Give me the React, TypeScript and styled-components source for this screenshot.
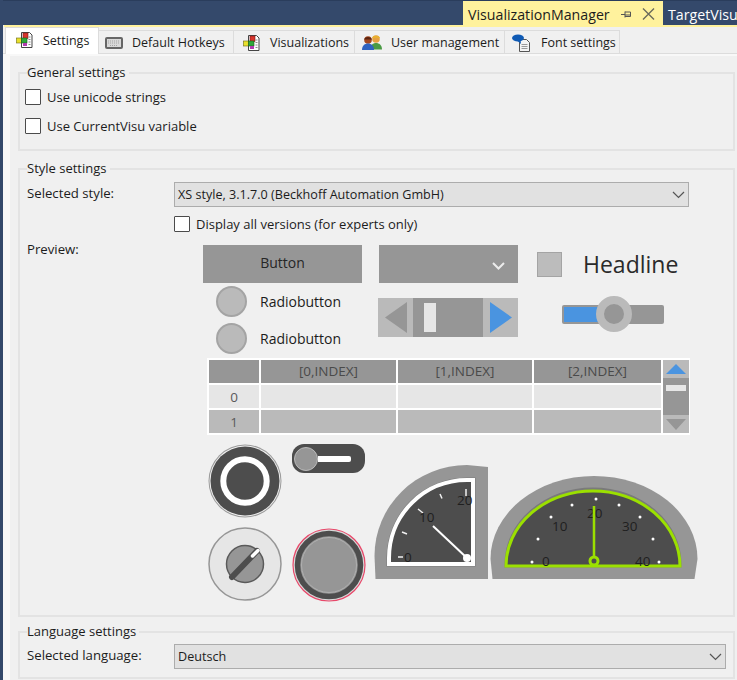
import React from 'react'
import styled, { createGlobalStyle } from 'styled-components'

const GlobalStyle = createGlobalStyle`
  html, body {
    margin: 0;
    padding: 0;
    background: #f0f0f0;
  }
  body {
    font-family: "Open Sans", "Noto Sans", "Liberation Sans", sans-serif;
    font-size: 13px;
    color: #1c1c1c;
  }
`

const Frame = styled.div`
  width: 737px;
  height: 680px;
  overflow: hidden;
  display: flex;
  flex-direction: column;
  background: #f0f0f0;
  box-sizing: border-box;
  border-left: 3px solid #34496b;
`

const TitleBar = styled.div`
  height: 25px;
  margin-left: -3px;
  flex: none;
  display: flex;
  justify-content: flex-end;
  background: #34496b;
  border-top: 1px solid #2a3d5c;
  box-sizing: border-box;
`

const DocTab = styled.div<{ $active?: boolean }>`
  display: flex;
  align-items: center;
  box-sizing: border-box;
  height: 24px;
  font-size: 14.2px;
  padding-top: 2px;
  white-space: nowrap;
  overflow: hidden;
  padding-left: 5px;
  width: ${p => (p.$active ? '200px' : '74px')};
  background: ${p => (p.$active ? '#fff29d' : '#34496b')};
  color: ${p => (p.$active ? '#1c1c1c' : '#ffffff')};
`

const TabGlyphs = styled.span`
  margin-left: 11px;
  display: flex;
  align-items: center;
  gap: 10px;
`

const AccentLine = styled.div`
  height: 2px;
  margin-left: 1px;
  flex: none;
  background: #fff29d;
`

const TabStrip = styled.div`
  height: 27px;
  flex: none;
  display: flex;
  align-items: flex-end;
  padding-left: 2px;
  border-bottom: 1px solid #dcdcdc;
  box-sizing: border-box;
  background: #f0f0f0;
`

const Tab = styled.div<{ $active?: boolean; $width: number; $pad: number }>`
  width: ${p => p.$width}px;
  height: ${p => (p.$active ? 27 : 23)}px;
  margin-bottom: ${p => (p.$active ? -1 : 0)}px;
  box-sizing: border-box;
  display: flex;
  align-items: center;
  gap: 8px;
  font-size: 12.5px;
  padding-left: ${p => p.$pad}px;
  padding-top: ${p => (p.$active ? 0 : 1)}px;
  padding-bottom: ${p => (p.$active ? 2 : 0)}px;
  background: ${p => (p.$active ? '#ffffff' : '#f0f0f0')};
  border: 1px solid #dcdcdc;
  border-left-width: ${p => (p.$active ? 1 : 0)}px;
  border-bottom: none;
  white-space: nowrap;
  position: relative;
`

const Content = styled.div`
  flex: 1;
  padding: 9px 2px 0 8px;
  border-left: 7px solid #f8f8f8;
  border-top: 2px solid #f8f8f8;
  display: flex;
  flex-direction: column;
`

const Group = styled.fieldset<{ $height: number; $gap?: number }>`
  margin: 0 0 ${p => p.$gap ?? 0}px 0;
  padding: 0 7px 0 7px;
  height: ${p => p.$height}px;
  flex: none;
  box-sizing: border-box;
  border: 2px solid #e3e3e3;
  min-width: 0;
`

const GroupTitle = styled.legend`
  padding: 0 3px 0 0;
  margin-left: 0;
  font-size: 13px;
  line-height: 15px;
`

const CheckRow = styled.label<{ $top: number; $indent?: number }>`
  display: flex;
  align-items: center;
  gap: 6px;
  margin-top: ${p => p.$top}px;
  margin-left: ${p => p.$indent ?? -2}px;
  height: 16px;
`

const CheckBox = styled.span`
  width: 16px;
  height: 16px;
  flex: none;
  box-sizing: border-box;
  background: #ffffff;
  border: 1px solid #4b4b4b;
  border-radius: 1px;
`

const FieldRow = styled.div<{ $top: number }>`
  display: flex;
  align-items: center;
  margin-top: ${p => p.$top}px;
  height: 26px;
`

const FieldLabel = styled.span`
  width: 147px;
  flex: none;
  font-size: 13.2px;
  margin-top: -2px;
`

const Select = styled.div<{ $width: number }>`
  width: ${p => p.$width}px;
  height: 25px;
  box-sizing: border-box;
  display: flex;
  align-items: center;
  justify-content: space-between;
  padding: 1px 3px 0 3px;
  font-size: 12.6px;
  background: #e1e1e1;
  border: 1px solid #acacac;
`

const PreviewRow = styled.div`
  display: flex;
  margin-top: 5px;
`

const PreviewLabel = styled.span`
  width: 176px;
  flex: none;
  margin-top: 3px;
  font-size: 13.2px;
`

const PreviewArea = styled.div`
  display: flex;
  flex-direction: column;
  margin-top: 8px;
`

const TopControls = styled.div`
  display: flex;
`

const Column = styled.div<{ $width: number }>`
  width: ${p => p.$width}px;
  flex: none;
  display: flex;
  flex-direction: column;
`

const PlainButton = styled.div`
  height: 38px;
  width: 159px;
  box-sizing: border-box;
  padding-bottom: 3px;
  background: #969696;
  display: flex;
  align-items: center;
  justify-content: center;
  font-size: 14px;
  color: #262626;
`

const DropButton = styled(PlainButton)`
  width: 139px;
  justify-content: flex-end;
  padding: 4px 13px 0 0;
`

const RadioRow = styled.div`
  display: flex;
  align-items: center;
  height: 31px;
  margin-left: 13px;
  gap: 13px;
  font-size: 14px;
`

const RadioDot = styled.span`
  width: 31px;
  height: 31px;
  box-sizing: border-box;
  border-radius: 50%;
  background: #bababa;
  border: 2px solid #a4a4a4;
`

const Radios = styled.div`
  display: flex;
  flex-direction: column;
  gap: 6px;
  margin-top: 3px;
`

const Stepper = styled.div`
  width: 140px;
  height: 39px;
  margin: 15px 0 0 -1px;
  display: flex;
  background: #bababa;
`

const StepperEnd = styled.div`
  width: 35px;
  flex: none;
  display: flex;
  align-items: center;
  justify-content: center;
`

const StepperTrack = styled.div`
  flex: 1;
  background: #969696;
  padding: 5px 0 0 11px;
`

const StepperThumb = styled.div`
  width: 12px;
  height: 29px;
  background: #e6e6e6;
`

const HeadlineRow = styled.div`
  display: flex;
  align-items: center;
  gap: 21px;
  height: 38px;
`

const HeadlineBox = styled.span`
  width: 25px;
  height: 25px;
  box-sizing: border-box;
  background: #bcbcbc;
  border: 1px solid #a4a4a4;
`

const Headline = styled.span`
  font-size: 23px;
  line-height: 30px;
  margin-top: -1px;
  font-weight: 400;
  color: #2a2a2a;
`

const SliderBox = styled.div`
  margin: 13px 0 0 25px;
  width: 102px;
  height: 36px;
  display: flex;
  align-items: center;
  position: relative;
`

const SliderTrack = styled.div`
  width: 102px;
  height: 19px;
  box-sizing: border-box;
  background: #969696;
  border-radius: 2px;
  padding: 2px;
`

const SliderFill = styled.div`
  width: 36px;
  height: 100%;
  background: #4a94e0;
`

const SliderKnob = styled.span`
  position: absolute;
  left: 34px;
  top: 0;
  width: 36px;
  height: 36px;
  box-sizing: border-box;
  border-radius: 50%;
  background: #969696;
  border: 8px solid #bababa;
`

const TableWrap = styled.div`
  margin: 4px 0 0 4px;
  width: 483px;
  height: 77px;
  box-sizing: border-box;
  background: #ffffff;
  padding: 2px;
  display: flex;
  gap: 2px;
`

const TableGrid = styled.div`
  width: 452px;
  display: grid;
  grid-template-columns: 50px 135px 134px 127px;
  grid-template-rows: 23px 23px 23px;
  gap: 2px;
`

const Cell = styled.div<{ $tone: 'head' | 'light' | 'mid' }>`
  display: flex;
  align-items: center;
  justify-content: center;
  font-size: 13.5px;
  padding-bottom: ${p => (p.$tone === 'head' ? 2 : 0)}px;
  color: ${p => (p.$tone === 'head' ? '#4a4a4a' : '#5a5a5a')};
  background: ${p => (p.$tone === 'head' ? '#969696' : p.$tone === 'light' ? '#e6e6e6' : '#bababa')};
`

const ScrollBar = styled.div`
  width: 26px;
  flex: none;
  display: flex;
  flex-direction: column;
  background: #969696;
`

const ScrollEnd = styled.div`
  height: 18px;
  flex: none;
  background: #bababa;
  display: flex;
  align-items: center;
  justify-content: center;
`

const ScrollTrack = styled.div`
  flex: 1;
  padding: 7px 3px 0;
`

const ScrollThumb = styled.div`
  height: 6px;
  background: #e6e6e6;
`

const BottomControls = styled.div`
  display: flex;
  margin: 9px 0 0 5px;
  align-items: flex-start;
`

const Stack = styled.div<{ $width: number; $gap: number }>`
  width: ${p => p.$width}px;
  flex: none;
  display: flex;
  flex-direction: column;
  gap: ${p => p.$gap}px;
`

const Toggle = styled.div`
  width: 73px;
  height: 29px;
  box-sizing: border-box;
  border-radius: 12px;
  background: #4d4d4d;
  display: flex;
  align-items: center;
  padding-left: 2px;
`

const ToggleKnob = styled.span`
  width: 24px;
  height: 24px;
  flex: none;
  box-sizing: border-box;
  border-radius: 50%;
  background: #969696;
  border: 1px solid #bababa;
`

const ToggleBar = styled.span`
  width: 33px;
  height: 6px;
  background: #ffffff;
  border-radius: 0 2px 2px 0;
`

const GaugeSlot = styled.div<{ $top: number; $left: number }>`
  margin: ${p => p.$top}px 0 0 ${p => p.$left}px;
  line-height: 0;
`

const GaugeText = styled.text`
  font-family: "Open Sans", "Noto Sans", sans-serif;
  font-size: 13.5px;
  fill: #1f1f1f;
`

const SettingsIcon = () => (
  <svg width="20" height="18" viewBox="-1 0 20 18">
    <path d="M5.500 1.500h8l2.500 2.500v12.500H5.500z" fill="#fff" stroke="#444" />
    <rect x="7" y="2" width="5" height="5.500" fill="#d9342c" stroke="#7a1d18" strokeWidth=".6" />
    <rect x="0.500" y="7" width="5" height="5" fill="#e8e02c" stroke="#6d6a12" strokeWidth=".6" />
    <rect x="5.500" y="7" width="5.500" height="5" fill="#2fa83a" stroke="#175a1d" strokeWidth=".6" />
    <rect x="7" y="12" width="4" height="3" fill="#b23bb0" />
    <path d="M12.500 6h2M12.500 8.500h2M12.500 11h2M12.500 13.500h2" stroke="#8a8a8a" />
  </svg>
)

const KeyboardIcon = () => (
  <svg width="20" height="16" viewBox="0 0 20 16">
    <rect x="1" y="2" width="18" height="12" rx="2" fill="#666666" />
    <rect x="3" y="4" width="14" height="8" fill="#d8d8d8" />
    <path d="M4 6h12M4 8h12M6 10.500h8" stroke="#a4a4a4" strokeDasharray="1 1" />
  </svg>
)

const UsersIcon = () => (
  <svg width="22" height="18" viewBox="0 0 22 18">
    <circle cx="15" cy="5" r="3.800" fill="#e6a040" />
    <path d="M9.500 15.500c0-4.500 2.500-6.500 5.500-6.500s6 2 6 6.500z" fill="#4a9a44" />
    <path d="M11 4c1-3 7-3 8 0z" fill="#e8b030" />
    <circle cx="7" cy="6" r="3.800" fill="#a5481f" />
    <path d="M1 16c0-4.500 3-6.500 6-6.500s6 2 6 6.500z" fill="#2f63c0" />
    <path d="M3 5.500c1-3.500 7-3.500 8 0z" fill="#5c2410" />
  </svg>
)

const FontIcon = () => (
  <svg width="22" height="18" viewBox="0 0 22 18">
    <path d="M8.500 5.500h7l3 3v9h-10z" fill="#f4f4f4" stroke="#555" />
    <path d="M10.500 10.500h6M10.500 12.500h6M10.500 14.500h6" stroke="#9a9a9a" />
    <ellipse cx="7" cy="4" rx="6" ry="3.500" fill="#0f5ab4" />
    <path d="M6 6.500l4 3.500-.5-4z" fill="#0f5ab4" />
  </svg>
)

const Chevron = ({ color, width = 1.2 }: { color: string; width?: number }) => (
  <svg width="13" height="8" viewBox="0 0 13 8">
    <path d="M1 1l5.500 5.500L12 1" fill="none" stroke={color} strokeWidth={width} />
  </svg>
)

const PinGlyph = () => (
  <svg width="11" height="9" viewBox="0 0 11 9">
    <path d="M0 4.500h4M4 1.500v6M4 2h5.500v4.500H4M4 5h5.500" fill="none" stroke="#555" />
  </svg>
)

const CloseGlyph = () => (
  <svg width="13" height="12" viewBox="0 0 13 12">
    <path d="M1 .500l11 11M12 .500l-11 11" stroke="#6a6a5c" strokeWidth="1.400" />
  </svg>
)

const Arrow = ({ dir, color, w, h }: { dir: 'l' | 'r' | 'u' | 'd'; color: string; w: number; h: number }) => {
  const pts = {
    l: `0,${h / 2} ${w},0 ${w},${h}`,
    r: `0,0 ${w},${h / 2} 0,${h}`,
    u: `${w / 2},0 ${w},${h} 0,${h}`,
    d: `0,0 ${w},0 ${w / 2},${h}`
  }[dir]
  return (
    <svg width={w} height={h} viewBox={`0 0 ${w} ${h}`}>
      <polygon points={pts} fill={color} />
    </svg>
  )
}

const RingButton = () => (
  <svg width="74" height="74" viewBox="0 0 74 74">
    <circle cx="37" cy="37" r="36.500" fill="#9a9a9a" />
    <circle cx="37" cy="37" r="35.500" fill="#f0f0f0" />
    <circle cx="37" cy="37" r="34.500" fill="#4d4d4d" />
    <circle cx="37" cy="37" r="21.700" fill="#4d4d4d" stroke="#ffffff" strokeWidth="6" />
  </svg>
)

const RotaryKnob = () => (
  <svg width="74" height="74" viewBox="0 0 74 74">
    <circle cx="37" cy="37" r="36" fill="#e6e6e6" stroke="#969696" strokeWidth="1.500" />
    <circle cx="37" cy="37" r="18.500" fill="#969696" stroke="#5a5a5a" strokeWidth="1.500" />
    <path d="M24 50L49 24" stroke="#4d4d4d" strokeWidth="6" strokeLinecap="round" />
    <path d="M44.500 29L50 23.500" stroke="#ffffff" strokeWidth="3.500" strokeLinecap="round" />
  </svg>
)

const PushButton = () => (
  <svg width="74" height="74" viewBox="0 0 74 74">
    <circle cx="37" cy="37" r="36" fill="#d8d8d8" stroke="#e8486a" strokeWidth="1.200" />
    <circle cx="37" cy="37" r="31.500" fill="#969696" stroke="#4d4d4d" strokeWidth="5.500" />
    <circle cx="37" cy="37" r="27.500" fill="#969696" stroke="#b0b0b0" strokeWidth="1" />
  </svg>
)

const QuarterGauge = () => (
  <svg width="114" height="114" viewBox="0 0 114 114">
    <path d="M1.500 114L0.500 91A92.500 91 0 0 1 93 0L114 2V114z" fill="#969696" />
    <path d="M12.500 101.500V93A80.500 80.500 0 0 1 93 12.500h8.500v89z" fill="#7a7a7a" />
    <path d="M15 99V93A78 78 0 0 1 93 15h6v84z" fill="#4d4d4d" stroke="#ffffff" strokeWidth="4" />
    <path d="M92 24v7M66 29l2 4.500M44 44l5 4M28 67l5 2M24 92h5" stroke="#f0f0f0" strokeWidth="1.500" />
    <GaugeText x="83" y="40">20</GaugeText>
    <GaugeText x="45" y="57">10</GaugeText>
    <GaugeText x="30" y="97">0</GaugeText>
    <path d="M93 93L59 61" stroke="#ffffff" strokeWidth="2" />
    <circle cx="93" cy="93" r="4" fill="#ffffff" />
  </svg>
)

const DIAL_DOTS = [
  [42, 86], [48, 63], [61, 41], [82, 29], [106, 23], [129, 29], [150, 41], [163, 63], [169, 86]
]

const HalfGauge = () => (
  <svg width="208" height="103" viewBox="0 0 208 103">
    <path d="M2.500 103L0.500 83A103.500 83 0 0 1 207.500 83L204.500 103z" fill="#969696" />
    <path d="M14.500 91.500V88A88.500 76.500 0 0 1 191.500 88v3.500z" fill="#7a7a7a" />
    <path d="M16 90A87 75 0 0 1 190 90z" fill="#4d4d4d" stroke="#9be000" strokeWidth="3" />
    {DIAL_DOTS.map(([cx, cy]) => (
      <circle key={`${cx}-${cy}`} cx={cx} cy={cy} r="1.500" fill="#ffffff" />
    ))}
    <GaugeText x="52" y="90">0</GaugeText>
    <GaugeText x="62" y="55">10</GaugeText>
    <GaugeText x="97" y="42">20</GaugeText>
    <GaugeText x="132" y="55">30</GaugeText>
    <GaugeText x="145" y="90">40</GaugeText>
    <path d="M104 85V30" stroke="#9be000" strokeWidth="2.500" />
    <circle cx="104" cy="85" r="4" fill="#4d4d4d" stroke="#9be000" strokeWidth="3" />
  </svg>
)

export default function App() {
  return (
    <Frame>
      <GlobalStyle />
      <TitleBar>
        <DocTab $active>
          VisualizationManager
          <TabGlyphs>
            <PinGlyph />
            <CloseGlyph />
          </TabGlyphs>
        </DocTab>
        <DocTab>TargetVisu</DocTab>
      </TitleBar>
      <AccentLine />
      <TabStrip>
        <Tab $active $width={94} $pad={9}>
          <SettingsIcon />
          Settings
        </Tab>
        <Tab $width={135} $pad={5}>
          <KeyboardIcon />
          Default Hotkeys
        </Tab>
        <Tab $width={121} $pad={8}>
          <SettingsIcon />
          Visualizations
        </Tab>
        <Tab $width={150} $pad={6}>
          <UsersIcon />
          User management
        </Tab>
        <Tab $width={115} $pad={6}>
          <FontIcon />
          Font settings
        </Tab>
      </TabStrip>
      <Content>
        <Group $height={86} $gap={10}>
          <GroupTitle>General settings</GroupTitle>
          <CheckRow $top={9}>
            <CheckBox />
            Use unicode strings
          </CheckRow>
          <CheckRow $top={13}>
            <CheckBox />
            Use CurrentVisu variable
          </CheckRow>
        </Group>
        <Group $height={456} $gap={7}>
          <GroupTitle>Style settings</GroupTitle>
          <FieldRow $top={5}>
            <FieldLabel>Selected style:</FieldLabel>
            <Select $width={515}>
              XS style, 3.1.7.0 (Beckhoff Automation GmbH)
              <Chevron color="#555" />
            </Select>
          </FieldRow>
          <CheckRow $top={9} $indent={147}>
            <CheckBox />
            Display all versions (for experts only)
          </CheckRow>
          <PreviewRow>
            <PreviewLabel>Preview:</PreviewLabel>
            <PreviewArea>
              <TopControls>
                <Column $width={176}>
                  <PlainButton>Button</PlainButton>
                  <Radios>
                    <RadioRow>
                      <RadioDot />
                      Radiobutton
                    </RadioRow>
                    <RadioRow>
                      <RadioDot />
                      Radiobutton
                    </RadioRow>
                  </Radios>
                </Column>
                <Column $width={158}>
                  <DropButton>
                    <Chevron color="#ececec" width={2} />
                  </DropButton>
                  <Stepper>
                    <StepperEnd>
                      <Arrow dir="l" color="#969696" w={22} h={31} />
                    </StepperEnd>
                    <StepperTrack>
                      <StepperThumb />
                    </StepperTrack>
                    <StepperEnd>
                      <Arrow dir="r" color="#4a94e0" w={22} h={31} />
                    </StepperEnd>
                  </Stepper>
                </Column>
                <Column $width={150}>
                  <HeadlineRow>
                    <HeadlineBox />
                    <Headline>Headline</Headline>
                  </HeadlineRow>
                  <SliderBox>
                    <SliderTrack>
                      <SliderFill />
                    </SliderTrack>
                    <SliderKnob />
                  </SliderBox>
                </Column>
              </TopControls>
              <TableWrap>
                <TableGrid>
                  <Cell $tone="head" />
                  <Cell $tone="head">[0,INDEX]</Cell>
                  <Cell $tone="head">[1,INDEX]</Cell>
                  <Cell $tone="head">[2,INDEX]</Cell>
                  <Cell $tone="light">0</Cell>
                  <Cell $tone="light" />
                  <Cell $tone="light" />
                  <Cell $tone="light" />
                  <Cell $tone="mid">1</Cell>
                  <Cell $tone="mid" />
                  <Cell $tone="mid" />
                  <Cell $tone="mid" />
                </TableGrid>
                <ScrollBar>
                  <ScrollEnd>
                    <Arrow dir="u" color="#4a94e0" w={20} h={10} />
                  </ScrollEnd>
                  <ScrollTrack>
                    <ScrollThumb />
                  </ScrollTrack>
                  <ScrollEnd>
                    <Arrow dir="d" color="#969696" w={20} h={11} />
                  </ScrollEnd>
                </ScrollBar>
              </TableWrap>
              <BottomControls>
                <Stack $width={84} $gap={9}>
                  <RingButton />
                  <RotaryKnob />
                </Stack>
                <Stack $width={82} $gap={55}>
                  <Toggle>
                    <ToggleKnob />
                    <ToggleBar />
                  </Toggle>
                  <PushButton />
                </Stack>
                <GaugeSlot $top={21} $left={0}>
                  <QuarterGauge />
                </GaugeSlot>
                <GaugeSlot $top={32} $left={2}>
                  <HalfGauge />
                </GaugeSlot>
              </BottomControls>
            </PreviewArea>
          </PreviewRow>
        </Group>
        <Group $height={55}>
          <GroupTitle>Language settings</GroupTitle>
          <FieldRow $top={4}>
            <FieldLabel>Selected language:</FieldLabel>
            <Select $width={554}>
              Deutsch
              <Chevron color="#555" />
            </Select>
          </FieldRow>
        </Group>
      </Content>
    </Frame>
  )
}
